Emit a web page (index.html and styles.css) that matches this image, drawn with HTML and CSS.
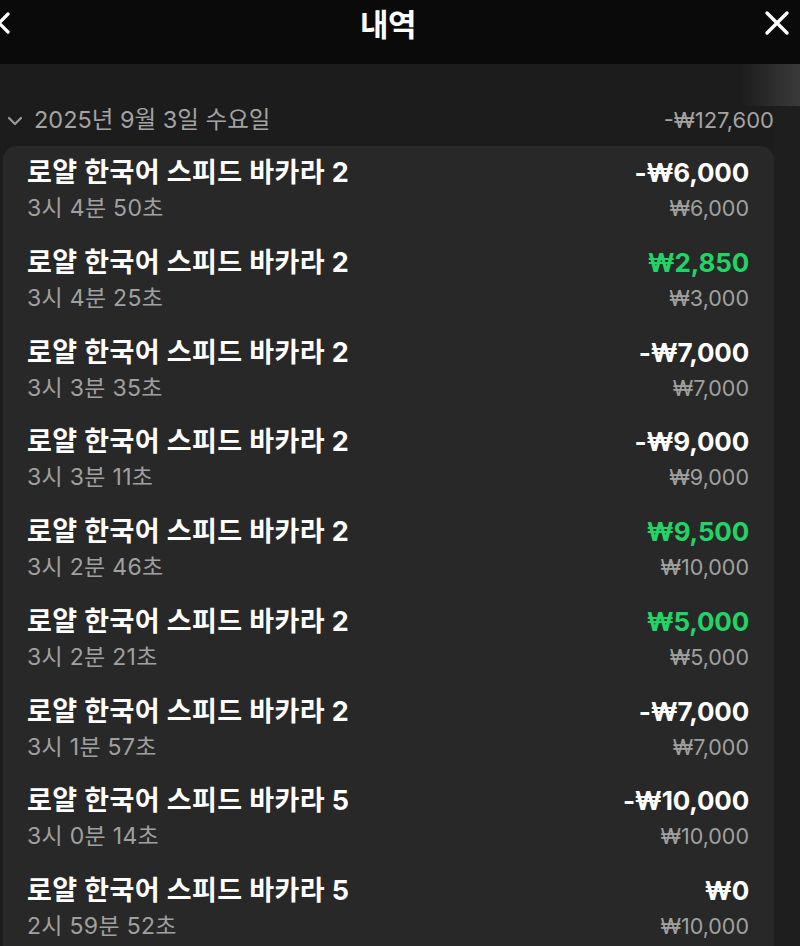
FILE: index.html
```html
<!DOCTYPE html>
<html lang="ko">
<head>
<meta charset="utf-8">
<link rel="stylesheet" href="styles.css">
</head>
<body>
<div class="app">
  <header class="topbar">
    <svg class="back" width="12" height="24" viewBox="0 0 12 24"><path d="M8 3 L-1 12 L8 21" fill="none" stroke="#fff" stroke-width="3.2" stroke-linecap="round" stroke-linejoin="round"/></svg>
    <h1 class="title">내역</h1>
    <svg class="close" width="26" height="26" viewBox="0 0 26 26"><path d="M3 3 L23 23 M23 3 L3 23" stroke="#fff" stroke-width="3.4" stroke-linecap="round"/></svg>
  </header>
  <main class="content">
    <div class="shade"></div>
    <div class="day">
      <div class="day-left">
        <svg class="chev" width="16" height="10" viewBox="0 0 16 10"><path d="M2 2 L8 8 L14 2" fill="none" stroke="#9a9a9a" stroke-width="2.2" stroke-linecap="round" stroke-linejoin="round"/></svg>
        <span>2025년 9월 3일 수요일</span>
      </div>
      <span class="day-total">-₩127,600</span>
    </div>
    <section class="card">
      <div class="row"><div class="col"><div class="name">로얄 한국어 스피드 바카라 2</div><div class="time">3시 4분 50초</div></div><div class="col right"><div class="amt">-₩6,000</div><div class="bet">₩6,000</div></div></div>
      <div class="row"><div class="col"><div class="name">로얄 한국어 스피드 바카라 2</div><div class="time">3시 4분 25초</div></div><div class="col right"><div class="amt win">₩2,850</div><div class="bet">₩3,000</div></div></div>
      <div class="row"><div class="col"><div class="name">로얄 한국어 스피드 바카라 2</div><div class="time">3시 3분 35초</div></div><div class="col right"><div class="amt">-₩7,000</div><div class="bet">₩7,000</div></div></div>
      <div class="row"><div class="col"><div class="name">로얄 한국어 스피드 바카라 2</div><div class="time">3시 3분 11초</div></div><div class="col right"><div class="amt">-₩9,000</div><div class="bet">₩9,000</div></div></div>
      <div class="row"><div class="col"><div class="name">로얄 한국어 스피드 바카라 2</div><div class="time">3시 2분 46초</div></div><div class="col right"><div class="amt win">₩9,500</div><div class="bet">₩10,000</div></div></div>
      <div class="row"><div class="col"><div class="name">로얄 한국어 스피드 바카라 2</div><div class="time">3시 2분 21초</div></div><div class="col right"><div class="amt win">₩5,000</div><div class="bet">₩5,000</div></div></div>
      <div class="row"><div class="col"><div class="name">로얄 한국어 스피드 바카라 2</div><div class="time">3시 1분 57초</div></div><div class="col right"><div class="amt">-₩7,000</div><div class="bet">₩7,000</div></div></div>
      <div class="row"><div class="col"><div class="name">로얄 한국어 스피드 바카라 5</div><div class="time">3시 0분 14초</div></div><div class="col right"><div class="amt">-₩10,000</div><div class="bet">₩10,000</div></div></div>
      <div class="row"><div class="col"><div class="name">로얄 한국어 스피드 바카라 5</div><div class="time">2시 59분 52초</div></div><div class="col right"><div class="amt">₩0</div><div class="bet">₩10,000</div></div></div>
    </section>
  </main>
</div>
</body>
</html>
```
FILE: styles.css
```css
html, body {
  margin: 0;
  padding: 0;
  background: #1c1c1c;
  overflow: hidden;
}
body {
  font-family: "Inter", "Noto Sans CJK KR", sans-serif;
  color: #fff;
  width: 800px;
  height: 946px;
}
.app {
  display: flex;
  flex-direction: column;
  height: 946px;
}
.topbar {
  flex-shrink: 0;
  height: 64px;
  box-sizing: border-box;
  padding-bottom: 18px;
  background: #0a0a0a;
  display: flex;
  align-items: center;
  justify-content: space-between;
  padding-right: 10px;
}
.back {
  display: block;
}
.close {
  display: block;
}
.title {
  margin: 0;
  font-size: 31px;
  font-weight: 700;
  line-height: 40px;
  letter-spacing: -0.5px;
  font-family: "Noto Sans CJK KR", sans-serif;
}
.content {
  position: relative;
  flex: 1;
  background: #1c1c1c;
  padding-right: 26px;
  box-shadow: inset -26px 0 0 #1e1e1e;
}
.shade {
  position: absolute;
  top: 0;
  right: 0;
  width: 60px;
  height: 42px;
  background: linear-gradient(to right, rgba(60,60,60,0), #3a3a3a);
}
.day {
  height: 82px;
  box-sizing: border-box;
  padding-top: 38px;
  display: flex;
  justify-content: space-between;
  align-items: flex-start;
  color: #a3a3a3;
  font-size: 23.5px;
  line-height: 36px;
}
.day-left {
  display: flex;
  align-items: center;
  gap: 11px;
  padding-left: 7px;
}
.chev {
  display: block;
  margin-top: 2px;
}
.day-total {
  font-size: 22px;
  letter-spacing: 0;
}
.card {
  margin-left: 3px;
  background: #282828;
  border-radius: 14px 14px 0 0;
  padding-top: 0;
}
.row {
  height: 89.75px;
  box-sizing: border-box;
  padding: 10px 25px 0 24px;
  display: flex;
  justify-content: space-between;
}
.col {
  display: flex;
  flex-direction: column;
}
.col.right {
  align-items: flex-end;
}
.name {
  font-size: 27px;
  font-weight: 700;
  line-height: 34px;
  letter-spacing: 0.4px;
}
.time {
  font-size: 23px;
  line-height: 36px;
  letter-spacing: 0.3px;
  color: #a0a0a0;
}
.amt {
  font-size: 26px;
  font-weight: 700;
  line-height: 34px;
  letter-spacing: -0.2px;
}
.amt.win {
  color: #22d366;
}
.bet {
  font-size: 21.5px;
  line-height: 36px;
  color: #a0a0a0;
}
```
